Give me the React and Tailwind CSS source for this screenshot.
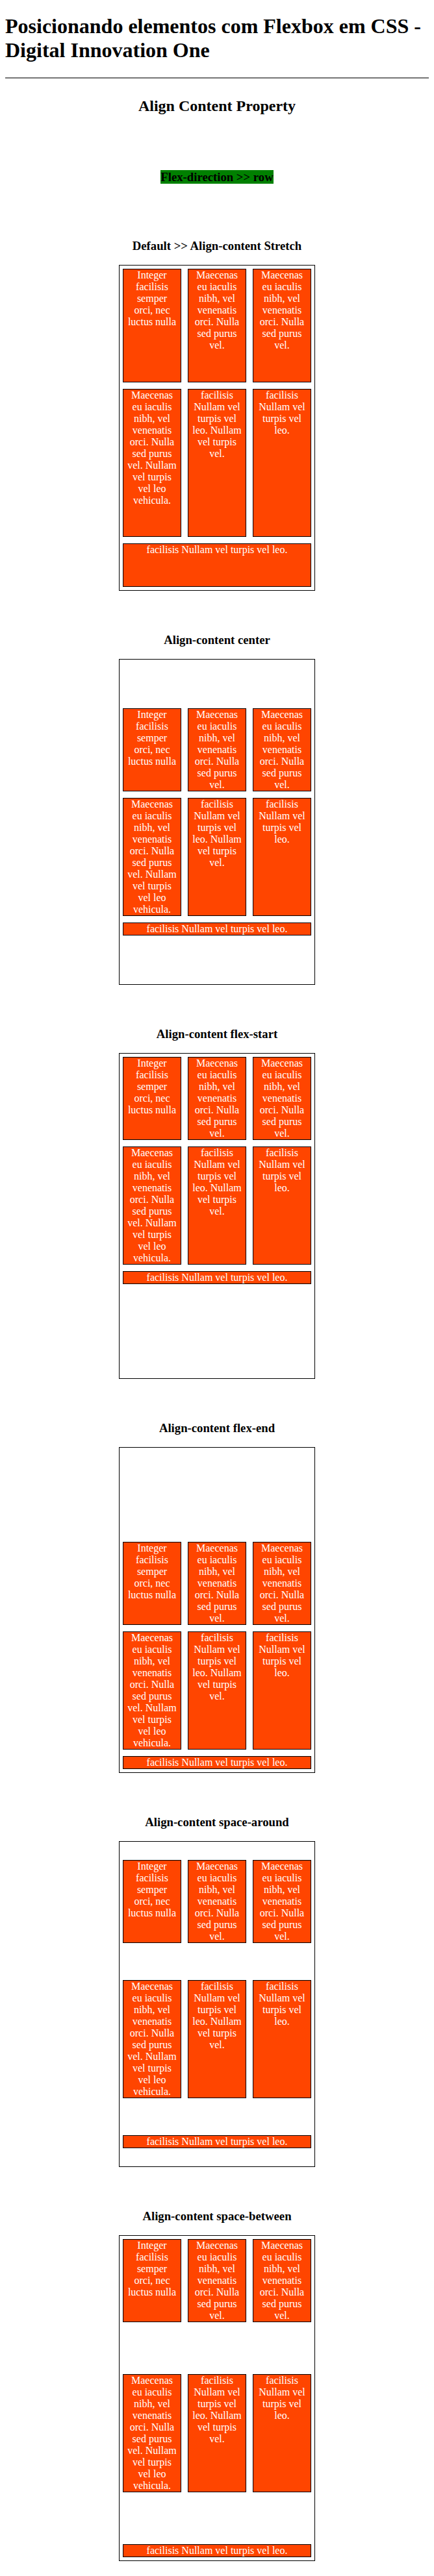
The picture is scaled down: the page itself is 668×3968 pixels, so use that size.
import React from 'react';

const items = [
  'Integer facilisis semper orci, nec luctus nulla',
  'Maecenas eu iaculis nibh, vel venenatis orci. Nulla sed purus vel.',
  'Maecenas eu iaculis nibh, vel venenatis orci. Nulla sed purus vel.',
  'Maecenas eu iaculis nibh, vel venenatis orci. Nulla sed purus vel. Nullam vel turpis vel leo vehicula.',
  'facilisis Nullam vel turpis vel leo. Nullam vel turpis vel.',
  'facilisis Nullam vel turpis vel leo.',
];

const sections = [
  { title: 'Default >> Align-content Stretch', align: 'content-stretch', first: true },
  { title: 'Align-content center', align: 'content-center' },
  { title: 'Align-content flex-start', align: 'content-start' },
  { title: 'Align-content flex-end', align: 'content-end' },
  { title: 'Align-content space-around', align: 'content-around' },
  { title: 'Align-content space-between', align: 'content-between' },
];

const FlexBox = ({ title, align, first }) => (
  <section className="flex flex-col">
    <h3
      className={`${first ? 'mt-[84px]' : 'mt-[64.5px]'} text-center text-[18.72px] font-bold leading-[normal]`}
    >
      {title}
    </h3>
    <div
      className={`mt-[18.5px] mx-auto w-[302px] h-[502px] border border-black flex flex-wrap ${align}`}
    >
      {items.map((text, i) => (
        <div
          key={i}
          className="w-[90px] m-[5px] px-[5px] border border-black bg-[#ff4500] text-white text-center text-[16px] leading-[normal]"
        >
          {text}
        </div>
      ))}
      <div className="w-[290px] m-[5px] px-[5px] border border-black bg-[#ff4500] text-white text-center text-[16px] leading-[normal]">
        facilisis Nullam vel turpis vel leo.
      </div>
    </div>
  </section>
);

const App = () => {
  return (
    <div className="min-h-screen bg-white text-black font-['Liberation_Serif','Times_New_Roman',serif] leading-[normal] px-2 flex flex-col">
      <h1 className="mt-[22px] text-[32px] font-bold leading-[normal]">
        Posicionando elementos com Flexbox em CSS - Digital Innovation One
      </h1>
      <hr className="mt-[23px] h-[2px] border-0 bg-[#757575]" />
      <h2 className="mt-[28.5px] text-center text-[24px] font-bold leading-[normal]">
        Align Content Property
      </h2>
      <h3 className="mt-[85px] text-center text-[18.72px] font-bold leading-[normal]">
        <span className="bg-[#008000]">Flex-direction &gt;&gt; row</span>
      </h3>
      {sections.map((s) => (
        <FlexBox key={s.title} {...s} />
      ))}
    </div>
  );
};

export default App;
